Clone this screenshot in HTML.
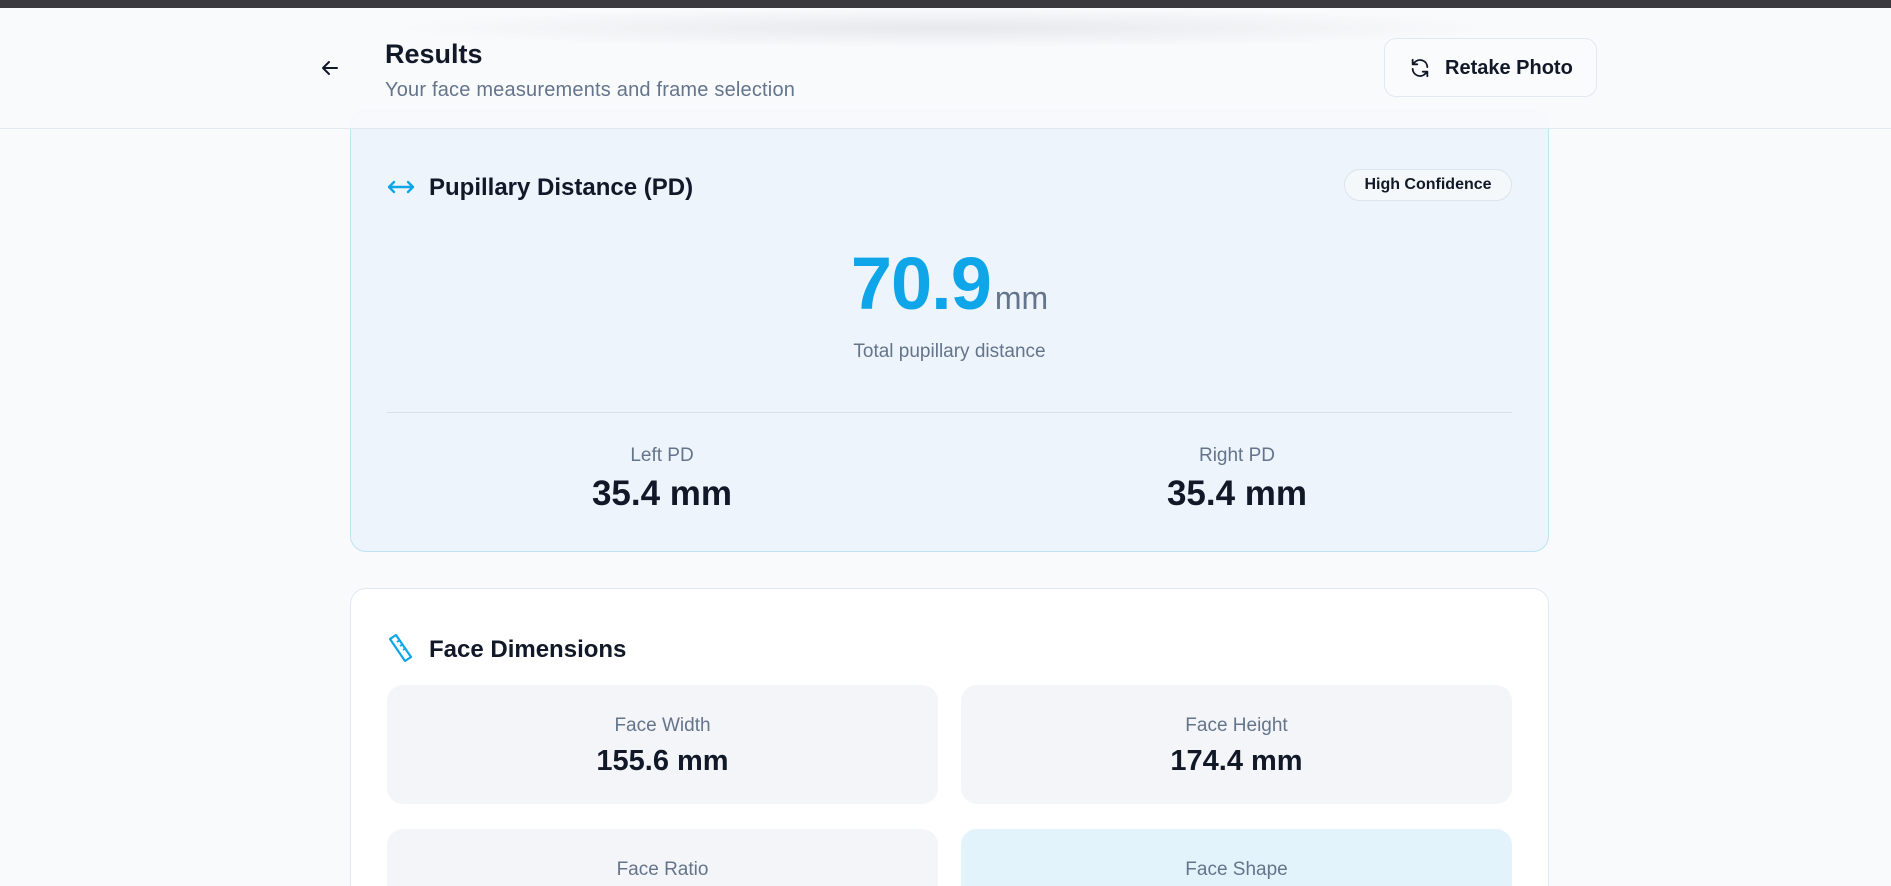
<!DOCTYPE html>
<html style="width:1891px;height:886px;overflow:hidden"><head><meta charset="utf-8"><style>
*{box-sizing:border-box;margin:0;padding:0}
body{width:1891px;height:886px;overflow:hidden;background:#f8fafc;font-family:"Liberation Sans",sans-serif;color:#111827;position:relative}
.top{position:absolute;left:0;top:0;width:1891px;height:8px;background:#3a393e}
.blur{position:absolute;left:380px;top:8px;width:1130px;height:40px;background:radial-gradient(ellipse at center,rgba(200,200,205,.35),rgba(248,250,252,0) 70%)}
.header{position:absolute;left:0;top:8px;width:1891px;height:121px;border-bottom:1px solid #e2e8f0;background:rgba(248,250,252,.9);z-index:2}
.card{position:absolute;left:350px;width:1199px;border-radius:16px;border:1px solid #e2e8f0}
.abs{position:absolute}
.c{text-align:center}
.tile{position:absolute;width:551px;height:119px;border-radius:16px;background:#f3f5f8}
.tl{position:absolute;width:100%;top:30px;text-align:center;font-size:19px;color:#64748b}
.tv{position:absolute;width:100%;top:60px;text-align:center;font-size:29px;font-weight:bold;color:#111827}
</style></head><body>
<div class="top"></div>
<div class="card" style="top:110px;height:442px;background:#edf4fb;border-color:#bfe3f3">
  <svg class="abs" style="left:35px;top:64px" width="30" height="24" viewBox="0 0 30 24"><path d="M3 12H27M8 7L3 12L8 17M22 7L27 12L22 17" stroke="#0ea5e9" stroke-width="2.4" fill="none" stroke-linecap="round" stroke-linejoin="round"/></svg>
  <div class="abs" style="left:78px;top:63px;font-size:24px;font-weight:bold">Pupillary Distance (PD)</div>
  <div class="abs" style="left:993px;top:58px;width:168px;height:32px;border:1px solid #dbe3ec;border-radius:16px;background:#f5f8fb;font-size:16px;font-weight:bold;text-align:center;line-height:30px">High Confidence</div>
  <div class="abs" style="left:0;width:100%;top:130px;text-align:center;white-space:nowrap"><span style="font-size:74px;font-weight:bold;color:#0ea5e9;letter-spacing:-1px">70.9</span><span style="font-size:32px;color:#64748b;margin-left:4px">mm</span></div>
  <div class="abs c" style="left:0;width:100%;top:230px;font-size:19px;color:#64748b">Total pupillary distance</div>
  <div class="abs" style="left:36px;width:1125px;top:301px;height:1px;background:#d9e2ec"></div>
  <div class="abs c" style="left:211px;width:200px;top:334px;font-size:19px;color:#64748b">Left PD</div>
  <div class="abs c" style="left:161px;width:300px;top:363px;font-size:35px;font-weight:bold">35.4 mm</div>
  <div class="abs c" style="left:786px;width:200px;top:334px;font-size:19px;color:#64748b">Right PD</div>
  <div class="abs c" style="left:736px;width:300px;top:363px;font-size:35px;font-weight:bold">35.4 mm</div>
</div>
<div class="card" style="top:588px;height:298px;background:#fff;border-bottom:none;border-radius:16px 16px 0 0;overflow:hidden">
  <svg class="abs" style="left:36px;top:43px" width="28" height="32" viewBox="0 0 28 32"><path d="M3 7L9 3L24 25L18 29Z" stroke="#0ea5e9" stroke-width="2.2" fill="none" stroke-linejoin="round"/><path d="M10 10L13 8M13 14L16 12M16 18L19 16" stroke="#0ea5e9" stroke-width="1.8"/></svg>
  <div class="abs" style="left:78px;top:47px;font-size:24px;font-weight:bold">Face Dimensions</div>
  <div class="tile" style="left:36px;top:96px"><div class="tl">Face Width</div><div class="tv">155.6 mm</div></div>
  <div class="tile" style="left:610px;top:96px"><div class="tl">Face Height</div><div class="tv">174.4 mm</div></div>
  <div class="tile" style="left:36px;top:240px"><div class="tl">Face Ratio</div></div>
  <div class="tile" style="left:610px;top:240px;background:#e3f3fb"><div class="tl">Face Shape</div></div>
</div>
<div class="header">
  <div class="blur" style="top:0"></div>
  <svg class="abs" style="left:320px;top:50px" width="20" height="20" viewBox="0 0 20 20"><path d="M17 10H3M9 4L3 10L9 16" stroke="#111827" stroke-width="2" fill="none" stroke-linecap="round" stroke-linejoin="round"/></svg>
  <div class="abs" style="left:385px;top:31px;font-size:27px;font-weight:bold">Results</div>
  <div class="abs" style="left:385px;top:71px;font-size:20px;color:#64748b;letter-spacing:.2px">Your face measurements and frame selection</div>
  <div class="abs" style="left:1384px;top:30px;width:213px;height:59px;border:1px solid #e2e8f0;border-radius:12px;background:#fafbfc">
    <svg class="abs" style="left:24px;top:18px" width="22" height="22" viewBox="0 0 24 24"><path d="M20 11A8 8 0 0 0 6 6L4 8M4 3V8H9M4 13A8 8 0 0 0 18 18L20 16M20 21V16H15" stroke="#111827" stroke-width="2" fill="none" stroke-linecap="round" stroke-linejoin="round"/></svg>
    <div class="abs" style="left:60px;top:18px;font-size:20px;font-weight:bold">Retake Photo</div>
  </div>
</div>
</body></html>
